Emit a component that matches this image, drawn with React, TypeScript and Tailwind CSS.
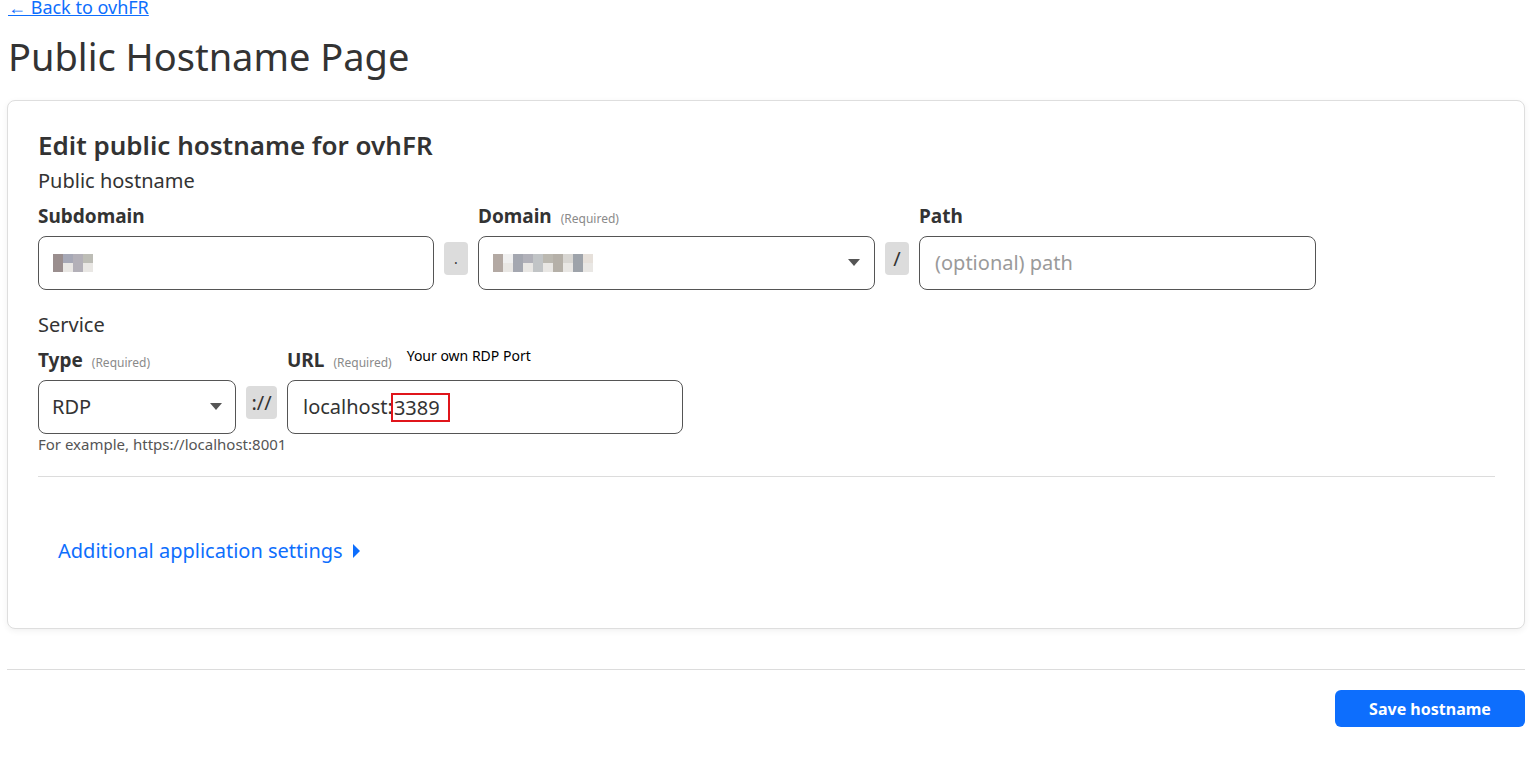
const font = { fontFamily: "'Noto Sans', 'Open Sans', sans-serif" };

function Blur({ cells }: { cells: string[] }) {
  // pixelated censored value
  return (
    <div className="flex flex-col">
      <div className="flex">
        {cells.map((c, i) => (
          <span key={i} className="block h-[9px] w-[10px]" style={{ background: c }} />
        ))}
      </div>
      <div className="flex">
        {cells.map((c, i) => (
          <span key={i} className="block h-[9px] w-[10px]" style={{ background: i % 2 ? "#e9e7e4" : c }} />
        ))}
      </div>
    </div>
  );
}

function Caret() {
  return (
    <svg width="12" height="8" viewBox="0 0 12 8" className="shrink-0">
      <path d="M0 0h12L6 7z" fill="#555" />
    </svg>
  );
}

function Sep({ children, w }: { children: React.ReactNode; w: string }) {
  return (
    <div className={`mb-[15px] flex h-[33px] ${w} shrink-0 items-center justify-center rounded-[4px] bg-[#dcdcdc] text-[#333]`}>
      {children}
    </div>
  );
}

function Label({ title, required }: { title: string; required?: boolean }) {
  return (
    <div className="flex h-[28px] items-baseline gap-[9px]">
      <span className="text-[19px] font-bold leading-[28px] text-[#333]">{title}</span>
      {required && <span className="text-[12px] text-[#8a8a8a]">(Required)</span>}
    </div>
  );
}

export default function App() {
  return (
    <div className="min-h-screen overflow-hidden bg-white pl-[7px] pr-[10px] text-[#333]" style={font}>
      <a href="#" className="-mt-[6px] ml-[1px] block w-fit text-[18px] leading-[26px] text-[#0d6efd] underline">
        ← Back to ovhFR
      </a>

      <h1 className="mt-[10px] ml-[1px] text-[38px] font-normal leading-[52px] text-[#333]">Public Hostname Page</h1>

      <div className="mt-[18px] rounded-[8px] border border-[#dedede] bg-white pl-[30px] pr-[29px] pt-[27px] pb-[63px] shadow-[0_2px_6px_rgba(0,0,0,0.06)]">
        <h2 className="text-[26px] font-semibold leading-[34px] text-[#333]">Edit public hostname for ovhFR</h2>
        <div className="mt-[6px] text-[20px] leading-[26px]">Public hostname</div>

        <div className="mt-[8px] flex items-end gap-[10px]">
          <div className="flex w-[396px] flex-col">
            <Label title="Subdomain" />
            <div className="mt-[6px] flex h-[54px] items-center rounded-[8px] border border-[#555] px-[14px]">
              <Blur cells={["#9a8e8e", "#a6a8b6", "#b3b0b8", "#bdbdb6"]} />
            </div>
          </div>
          <Sep w="w-[24px]">
            <span className="text-[14px] leading-none">.</span>
          </Sep>
          <div className="flex w-[397px] flex-col">
            <Label title="Domain" required />
            <div className="mt-[6px] flex h-[54px] items-center justify-between rounded-[8px] border border-[#555] pl-[14px] pr-[14px]">
              <Blur cells={["#b3a9a3", "#f0f0f0", "#a4a7b0", "#b1b1b9", "#c1c4c6", "#bbb8b0", "#b5b0a8", "#d8d6d2", "#9ea3aa", "#e6e0da"]} />
              <Caret />
            </div>
          </div>
          <Sep w="w-[24px]">
            <span className="text-[20px] leading-none">/</span>
          </Sep>
          <div className="flex w-[397px] flex-col">
            <Label title="Path" />
            <div className="mt-[6px] flex h-[54px] items-center rounded-[8px] border border-[#555] px-[15px]">
              <span className="text-[20px] text-[#9a9a9a]">(optional) path</span>
            </div>
          </div>
        </div>

        <div className="mt-[22px] text-[20px] leading-[26px]">Service</div>

        <div className="mt-[8px] flex items-end gap-[10px]">
          <div className="flex w-[198px] flex-col">
            <Label title="Type" required />
            <div className="mt-[6px] flex h-[54px] items-center justify-between rounded-[8px] border border-[#555] pl-[13px] pr-[13px]">
              <span className="text-[20px]">RDP</span>
              <Caret />
            </div>
          </div>
          <Sep w="w-[31px]">
            <span className="text-[20px] leading-none">://</span>
          </Sep>
          <div className="flex w-[396px] flex-col">
            <div className="flex items-start">
              <Label title="URL" required />
              <span className="ml-[15px] -mt-[3px] text-[14px] leading-[26px] text-black">Your own RDP Port</span>
            </div>
            <div className="mt-[6px] flex h-[54px] items-center rounded-[8px] border border-[#555] px-[15px]">
              <span className="text-[20px]">localhost:</span>
              <span className="-ml-[2px] h-[29px] border-2 border-[#e0151b] pl-[1px] pr-[8px] text-[20px] leading-[25px]">3389</span>
            </div>
          </div>
        </div>
        <div className="text-[15px] leading-[20px] text-[#555]">For example, https://localhost:8001</div>

        <hr className="mt-[22px] border-t border-[#dcdcdc]" />

        <button className="mt-[60px] ml-[20px] flex items-center gap-[10px] text-[20px] leading-[28px] text-[#0d6efd]">
          Additional application settings
          <svg width="7" height="14" viewBox="0 0 7 14">
            <path d="M0 0l7 7-7 7z" fill="#0d6efd" />
          </svg>
        </button>
      </div>

      <hr className="mt-[40px] border-t border-[#dcdcdc]" />

      <div className="mt-[20px] flex justify-end">
        <button className="h-[37px] w-[190px] rounded-[6px] bg-[#0d6efd] text-[16px] font-bold text-white">Save hostname</button>
      </div>
    </div>
  );
}
